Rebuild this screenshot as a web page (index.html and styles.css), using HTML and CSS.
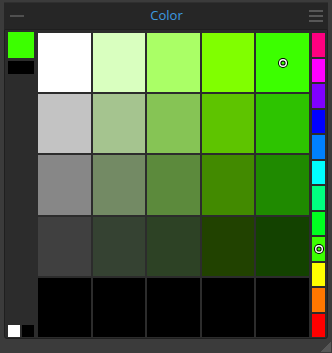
FILE: index.html
```html
<!DOCTYPE html>
<html lang="en">

<head>
    <meta charset="UTF-8">
    <meta name="viewport" content="width=device-width, initial-scale=1.0">
    <title>Color</title>
    <link rel="stylesheet" href="styles.css">
</head>

<body>
    <div class="window">
        <div class="titlebar">
            <span class="minimize"></span>
            <span class="title">Color</span>
            <span class="menu"><i></i><i></i><i></i></span>
        </div>
        <div class="panel">
            <div class="side">
                <div class="current"></div>
                <div class="previous"></div>
                <div class="spacer"></div>
                <div class="bw">
                    <span class="white"></span>
                    <span class="black"></span>
                </div>
            </div>
            <div class="grid">
                <div class="cell" style="background:#ffffff"></div>
                <div class="cell" style="background:#d9ffbf"></div>
                <div class="cell" style="background:#aaff66"></div>
                <div class="cell" style="background:#80ff00"></div>
                <div class="cell selected" style="background:#3cff00">
                    <svg class="marker" width="11" height="11" viewBox="0 0 11 11">
                        <circle cx="5.5" cy="5.5" r="5" fill="#000" />
                        <circle cx="5.5" cy="5.5" r="4" fill="#fff" />
                        <circle cx="5.5" cy="5.5" r="2.6" fill="#000" />
                        <circle cx="5.5" cy="5.5" r="1.6" fill="#3cff00" />
                    </svg>
                </div>

                <div class="cell" style="background:#c3c3c3"></div>
                <div class="cell" style="background:#a5c48f"></div>
                <div class="cell" style="background:#86c455"></div>
                <div class="cell" style="background:#5ec400"></div>
                <div class="cell" style="background:#2dc400"></div>

                <div class="cell" style="background:#878787"></div>
                <div class="cell" style="background:#738a64"></div>
                <div class="cell" style="background:#5c8a3c"></div>
                <div class="cell" style="background:#428a00"></div>
                <div class="cell" style="background:#1f8a00"></div>

                <div class="cell" style="background:#404040"></div>
                <div class="cell" style="background:#354232"></div>
                <div class="cell" style="background:#2d4225"></div>
                <div class="cell" style="background:#214200"></div>
                <div class="cell" style="background:#134200"></div>

                <div class="cell" style="background:#000000"></div>
                <div class="cell" style="background:#000000"></div>
                <div class="cell" style="background:#000000"></div>
                <div class="cell" style="background:#000000"></div>
                <div class="cell" style="background:#000000"></div>
            </div>
            <div class="hues">
                <div class="hue" style="background:#ff0080"></div>
                <div class="hue" style="background:#ff00ff"></div>
                <div class="hue" style="background:#8000ff"></div>
                <div class="hue" style="background:#0000ff"></div>
                <div class="hue" style="background:#0080ff"></div>
                <div class="hue" style="background:#00ffff"></div>
                <div class="hue" style="background:#00ff80"></div>
                <div class="hue" style="background:#00ff20"></div>
                <div class="hue selected" style="background:#3cff00">
                    <svg class="marker" width="11" height="11" viewBox="0 0 11 11">
                        <circle cx="5.5" cy="5.5" r="5" fill="#000" />
                        <circle cx="5.5" cy="5.5" r="4" fill="#fff" />
                        <circle cx="5.5" cy="5.5" r="2.6" fill="#000" />
                        <circle cx="5.5" cy="5.5" r="1.6" fill="#3cff00" />
                    </svg>
                </div>
                <div class="hue" style="background:#ffff00"></div>
                <div class="hue" style="background:#ff7700"></div>
                <div class="hue" style="background:#ff0000"></div>
            </div>
        </div>
    </div>
    <div class="footer">
        <span class="grip"></span>
    </div>
</body>

</html>
```

FILE: styles.css
```css
html,
body {
    margin: 0;
    background: #3b3b3b;
    width: 332px;
    height: 353px;
    overflow: hidden;
    font-family: "Open Sans", "Noto Sans", sans-serif;
}

.window {
    padding: 2px 4px 0 4px;
}

.titlebar {
    height: 27px;
    background: #262626;
    display: flex;
    align-items: center;
    justify-content: space-between;
    padding: 0 5px 0 6px;
    box-sizing: border-box;
    border-top: 1px solid #2f2f2f;
}

.minimize {
    display: block;
    width: 14px;
    height: 2px;
    background: #505050;
}

.title {
    color: #3d9be0;
    font-size: 13px;
    line-height: 1;
    margin-top: -1px;
}

.menu {
    display: flex;
    flex-direction: column;
    gap: 3px;
    width: 14px;
}

.menu i {
    display: block;
    height: 2px;
    background: #575757;
}

.panel {
    display: flex;
    height: 310px;
    box-sizing: border-box;
    padding: 3px 2px 1px 0;
    background: #2c2c2c;
    border: 1px solid #1f1f1f;
    border-radius: 0 0 3px 3px;
}

.side {
    width: 33px;
    padding-left: 3px;
    box-sizing: border-box;
    display: flex;
    flex-direction: column;
    margin-top: -1px;
}

.current {
    width: 26px;
    height: 26px;
    background: #3cff00;
}

.previous {
    width: 26px;
    height: 13px;
    margin-top: 3px;
    background: #000;
}

.spacer {
    flex: 1;
}

.bw {
    display: flex;
    gap: 2px;
}

.bw span {
    width: 12px;
    height: 12px;
}

.bw .white {
    background: #fff;
}

.bw .black {
    background: #000;
}

.grid {
    width: 271px;
    display: grid;
    grid-template-columns: repeat(5, 1fr);
    grid-template-rows: repeat(5, 1fr);
    gap: 2px;
}

.cell,
.hue {
    position: relative;
}

.hues {
    width: 13px;
    margin-left: 3px;
    display: grid;
    grid-template-rows: repeat(12, 1fr);
    gap: 2px;
}

.marker {
    position: absolute;
    left: 50%;
    top: 50%;
    transform: translate(-50%, -50%);
}

.footer {
    height: 14px;
    display: flex;
    justify-content: flex-end;
    align-items: flex-end;
    padding: 0 1px 1px 0;
    box-sizing: border-box;
}

.grip {
    display: block;
    width: 10px;
    height: 10px;
    background: linear-gradient(135deg, transparent 50%, #585858 50%);
}
```
